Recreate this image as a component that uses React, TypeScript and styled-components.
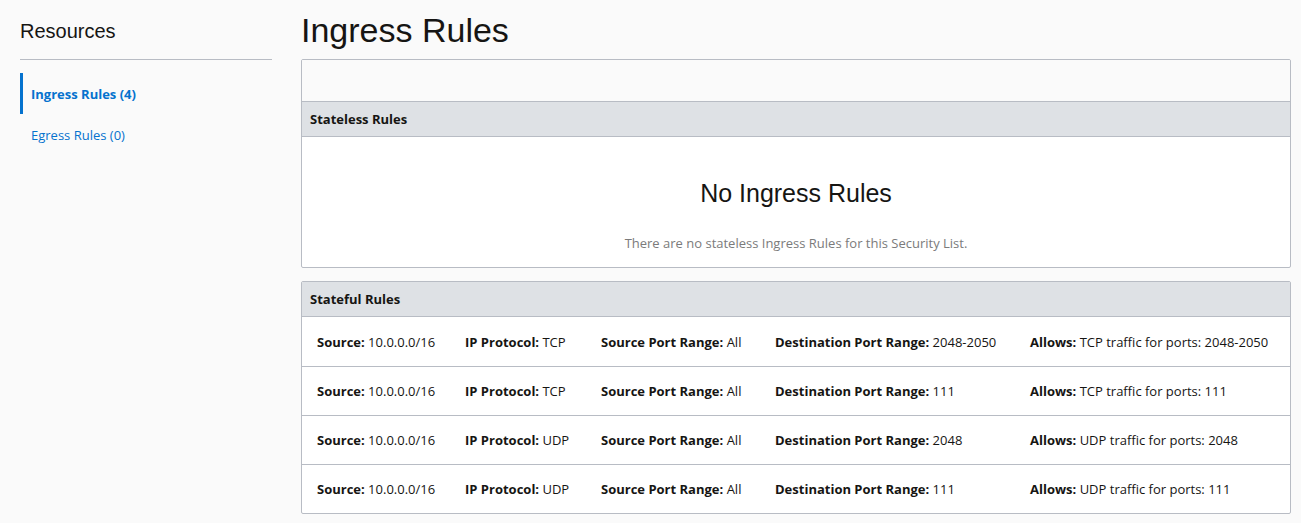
import React from "react";
import styled, { createGlobalStyle } from "styled-components";

const Global = createGlobalStyle`
  html, body { margin: 0; padding: 0; background: #fafafa; }
  body { font-family: "Open Sans", "Noto Sans", sans-serif; color: #161513; }
  * { box-sizing: border-box; }
`;

const Page = styled.div`
  display: flex;
  gap: 29px;
  padding: 0 10px 0 20px;
  width: 1301px;
  height: 523px;
  overflow: hidden;
`;

const Sidebar = styled.aside`
  width: 252px;
  flex: none;
  padding-top: 18px;
`;

const SideTitle = styled.h2`
  margin: 0;
  font-family: "Liberation Sans", Arial, sans-serif;
  font-weight: 400;
  font-size: 20px;
  line-height: 26px;
  color: #161513;
  padding-bottom: 15px;
  border-bottom: 1px solid #b8bcc4;
`;

const NavList = styled.ul`
  list-style: none;
  margin: 13px 0 0;
  padding: 0;
`;

const NavItem = styled.li<{ $active?: boolean }>`
  height: 41px;
  display: flex;
  align-items: center;
  border-left: 3px solid ${(p) => (p.$active ? "#0572ce" : "transparent")};
  padding-left: 8px;
  font-size: 13px;
  font-weight: ${(p) => (p.$active ? 700 : 400)};
  color: #0572ce;
`;

const Main = styled.main`
  flex: 1;
  display: flex;
  flex-direction: column;
`;

const Title = styled.h1`
  margin: 0;
  font-family: "Liberation Sans", Arial, sans-serif;
  font-weight: 400;
  font-size: 34px;
  line-height: 40px;
  height: 59px;
  padding-top: 10px;
  color: #161513;
`;

const Panel = styled.section<{ $mt?: number }>`
  border: 1px solid #b8bcc4;
  border-radius: 2px;
  background: #fff;
  margin-top: ${(p) => p.$mt ?? 0}px;
  overflow: hidden;
`;

const Toolbar = styled.div`
  height: 42px;
  background: #fafafa;
  border-bottom: 1px solid #b8bcc4;
`;

const PanelHeader = styled.div`
  height: 35px;
  background: #dee1e5;
  border-bottom: 1px solid #b8bcc4;
  display: flex;
  align-items: center;
  padding-left: 8px;
  font-size: 13px;
  font-weight: 700;
`;

const Empty = styled.div`
  height: 130px;
  display: flex;
  flex-direction: column;
  align-items: center;
  padding-top: 42px;
`;

const EmptyTitle = styled.div`
  font-family: "Liberation Sans", Arial, sans-serif;
  font-size: 25px;
  line-height: 28px;
  color: #161513;
`;

const EmptyText = styled.div`
  margin-top: 27px;
  font-size: 13px;
  color: #7b7b7b;
`;

const Row = styled.div`
  height: 49px;
  display: grid;
  grid-template-columns: 148px 136px 174px 255px 1fr;
  align-items: center;
  padding-left: 15px;
  font-size: 13px;
  border-top: 1px solid #b8bcc4;
  &:first-of-type { border-top: none; }
`;

const Field = styled.span`
  white-space: nowrap;
  b { font-weight: 700; }
`;

const rules = [
  { proto: "TCP", dest: "2048-2050" },
  { proto: "TCP", dest: "111" },
  { proto: "UDP", dest: "2048" },
  { proto: "UDP", dest: "111" },
];

const Rows = styled.div``;

export default function App() {
  return (
    <>
      <Global />
      <Page>
        <Sidebar>
          <SideTitle>Resources</SideTitle>
          <NavList>
            <NavItem $active>Ingress Rules (4)</NavItem>
            <NavItem>Egress Rules (0)</NavItem>
          </NavList>
        </Sidebar>
        <Main>
          <Title>Ingress Rules</Title>
          <Panel>
            <Toolbar />
            <PanelHeader>Stateless Rules</PanelHeader>
            <Empty>
              <EmptyTitle>No Ingress Rules</EmptyTitle>
              <EmptyText>There are no stateless Ingress Rules for this Security List.</EmptyText>
            </Empty>
          </Panel>
          <Panel $mt={13}>
            <PanelHeader>Stateful Rules</PanelHeader>
            <Rows>
              {rules.map((r, i) => (
                <Row key={i}>
                  <Field><b>Source:</b> 10.0.0.0/16</Field>
                  <Field><b>IP Protocol:</b> {r.proto}</Field>
                  <Field><b>Source Port Range:</b> All</Field>
                  <Field><b>Destination Port Range:</b> {r.dest}</Field>
                  <Field><b>Allows:</b> {r.proto} traffic for ports: {r.dest}</Field>
                </Row>
              ))}
            </Rows>
          </Panel>
        </Main>
      </Page>
    </>
  );
}
